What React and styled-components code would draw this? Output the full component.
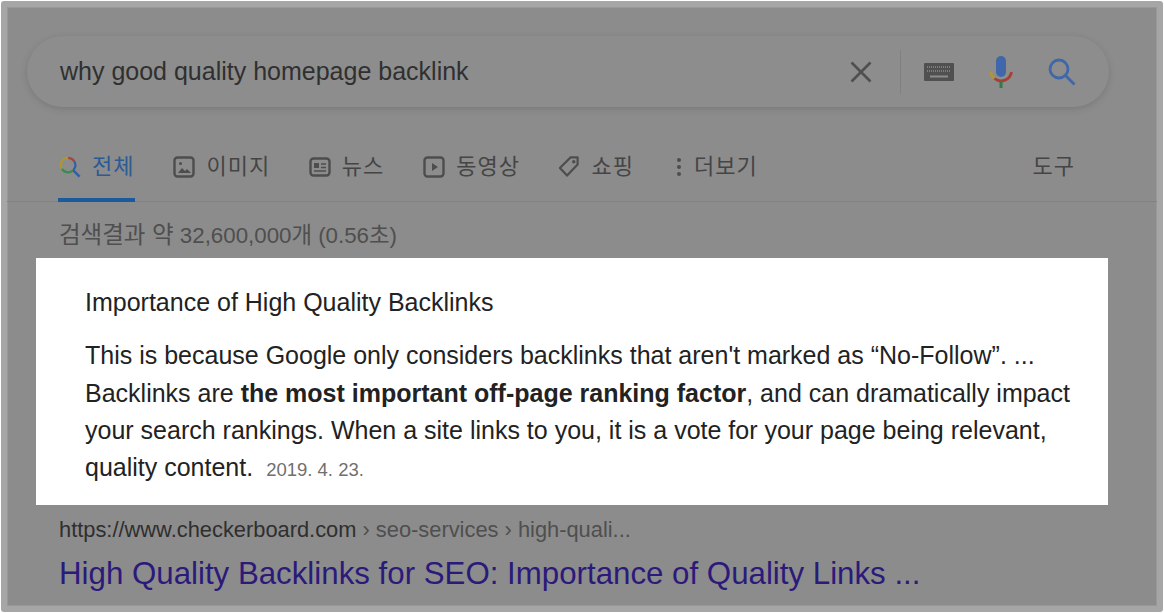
import React from 'react';
import styled, { createGlobalStyle } from 'styled-components';

const Global = createGlobalStyle`
  html, body { margin: 0; padding: 0; background: #fff; }
  body { font-family: "Liberation Sans", Arial, "Noto Sans CJK KR", sans-serif; }
`;

const Frame = styled.div`
  box-sizing: border-box;
  width: 1162px;
  height: 611px;
  margin: 1px 0 0 1px;
  border: 6px solid #a6a6a6;
  border-radius: 3px;
  background: #8c8c8c;
  box-shadow: inset 0 0 0 1px #989898;
  overflow: hidden;
`;

const SearchBar = styled.div`
  box-sizing: border-box;
  display: flex;
  align-items: center;
  width: 1082px;
  height: 71px;
  margin: 29px 0 0 20px;
  padding: 0 33px 0 33px;
  border-radius: 36px;
  background: #8d8d8d;
  box-shadow: 0 2px 6px rgba(60, 60, 60, 0.22);
`;

const Query = styled.div`
  flex: 1;
  font-size: 25px;
  color: #303030;
`;

const BarIcon = styled.svg`
  display: block;
  flex: none;
  margin-left: ${p => p.$gap || 0}px;
`;

const Sep = styled.div`
  width: 1px;
  height: 44px;
  margin-left: 27px;
  background: #808080;
`;

const Tabs = styled.div`
  display: flex;
  align-items: stretch;
  height: 94px;
  padding: 0 82px 0 51px;
  border-bottom: 1px solid #828282;
`;

const Tab = styled.div`
  box-sizing: border-box;
  display: flex;
  align-items: center;
  height: 95px;
  padding: 23px ${p => (p.$active ? 1 : 0)}px 0;
  margin-right: ${p => p.$gap}px;
  gap: 11px;
  font-size: 22px;
  letter-spacing: 1px;
  color: ${p => (p.$active ? '#2c5a94' : '#454545')};
  border-bottom: 4px solid ${p => (p.$active ? '#1c5a9e' : 'transparent')};
  font-family: "Noto Sans CJK KR", sans-serif;

  svg {
    display: block;
    margin-top: 5px;
  }
`;

const Tools = styled(Tab)`
  margin: 0 0 0 auto;
`;

const Stats = styled.div`
  margin: 20px 0 0 52px;
  height: 27px;
  line-height: 26px;
  font-size: 22.3px;
  color: #4f4f4f;
`;

const StatsLabel = styled.span`
  font-size: 23.5px;
`;

const Snippet = styled.div`
  box-sizing: border-box;
  width: 1072px;
  height: 247px;
  margin: 9px 0 0 29px;
  padding: 29px 0 0 49px;
  background: #fff;
  color: #222;
`;

const SnippetTitle = styled.div`
  font-size: 25px;
  line-height: 30px;
  margin-bottom: 20.4px;
`;

const SnippetBody = styled.div`
  font-size: 25px;
  line-height: 37.33px;
  white-space: nowrap;
`;

const Stamp = styled.span`
  font-size: 18.5px;
  color: #6f6f6f;
  margin-left: 6px;
`;

const Url = styled.div`
  margin: 11px 0 0 52px;
  font-size: 21.85px;
  line-height: 28px;
  color: #2f2f2f;
`;

const Crumb = styled.span`
  color: #4f4f4f;
`;

const ResultTitle = styled.div`
  margin: 12px 0 0 52px;
  font-size: 31.25px;
  line-height: 36px;
  color: #2b1a7a;
`;

const C = '#4d4d4d';

const ImageIcon = () => (
  <svg width="22" height="22" viewBox="0 0 22 22" fill="none">
    <rect x="1.5" y="1.5" width="19" height="19" rx="3" stroke={C} strokeWidth="2.4" />
    <circle cx="7.5" cy="7.5" r="1.5" fill={C} />
    <path d="M5 17l4-5 3 3 2-2 4 4z" fill={C} />
  </svg>
);
const NewsIcon = () => (
  <svg width="22" height="20" viewBox="0 0 22 20" fill="none">
    <rect x="1.5" y="1.5" width="19" height="17" rx="3" stroke={C} strokeWidth="2.4" />
    <rect x="5" y="6" width="5" height="5" fill={C} />
    <path d="M12 7h5M12 10.5h5M5 14h12" stroke={C} strokeWidth="1.7" />
  </svg>
);
const VideoIcon = () => (
  <svg width="22" height="22" viewBox="0 0 22 22" fill="none">
    <rect x="1.5" y="1.5" width="19" height="19" rx="3" stroke={C} strokeWidth="2.4" />
    <path d="M9 7l6 4-6 4z" fill={C} />
  </svg>
);
const TagIcon = () => (
  <svg width="22" height="23" viewBox="0 0 23 23" fill="none">
    <path d="M2 13L13 2h7.5v7.5L9.5 21z" stroke={C} strokeWidth="2.3" strokeLinejoin="round" />
    <circle cx="16.5" cy="6.5" r="1.8" fill={C} />
  </svg>
);
const MoreIcon = () => (
  <svg width="7" height="20" viewBox="0 0 7 20" fill={C}>
    <circle cx="3" cy="3" r="2" />
    <circle cx="3" cy="10" r="2" />
    <circle cx="3" cy="17" r="2" />
  </svg>
);
const ColorSearch = () => (
  <svg width="22" height="22" viewBox="0 0 23 23" fill="none" strokeWidth="2.2">
    <path d="M9.5 2a7.5 7.5 0 0 1 6.3 3.4" stroke="#a3483f" />
    <path d="M15.8 5.4A7.5 7.5 0 0 1 15 14.6" stroke="#2f5fa8" />
    <path d="M3 13.5A7.5 7.5 0 0 1 9.500 2" stroke="#b3962a" />
    <path d="M15 14.600A7.5 7.500 0 0 1 3 13.500" stroke="#3f8a4d" />
    <path d="M15 15l6.500 6.500" stroke="#2f5fa8" strokeWidth="2.600" />
  </svg>
);

export default function App() {
  return (
    <Frame>
      <Global />
      <SearchBar>
        <Query>why good quality homepage backlink</Query>
        <BarIcon width="24" height="24" viewBox="0 0 24 24" fill="none">
          <path d="M2.500 2.500l19 19M21.500 2.500l-19 19" stroke="#4f4f4f" strokeWidth="2.600" />
        </BarIcon>
        <Sep />
        <BarIcon $gap={23} width="30" height="18" viewBox="0 0 30 18">
          <rect width="30" height="18" rx="1" fill="#505050" />
          <path d="M3 4h24M3 8h24" stroke="#7c7c7c" strokeWidth="2" strokeDasharray="1 1" />
          <rect x="6" y="12.500" width="18" height="2" fill="#8c8c8c" />
        </BarIcon>
        <BarIcon $gap={35} width="24" height="32" viewBox="0 0 24 32" fill="none">
          <rect x="7" y="0" width="10" height="21" rx="5" fill="#3f67a9" />
          <path d="M1.500 16a10.500 10.500 0 0 0 4 6.500" stroke="#b3962a" strokeWidth="2.800" />
          <path d="M5.500 22.500a10.500 10.500 0 0 0 17-6.500" stroke="#a63f35" strokeWidth="2.800" />
          <rect x="10.500" y="26" width="3" height="6" fill="#2f7d45" />
        </BarIcon>
        <BarIcon $gap={35} width="28" height="28" viewBox="0 0 28 28" fill="none">
          <circle cx="11" cy="11" r="9" stroke="#3f67a9" strokeWidth="2.800" />
          <path d="M17.500 17.500l9 9" stroke="#3f67a9" strokeWidth="2.800" />
        </BarIcon>
      </SearchBar>
      <Tabs>
        <Tab $active $gap={38}>
          <ColorSearch />
          전체
        </Tab>
        <Tab $gap={38.5}>
          <ImageIcon />
          이미지
        </Tab>
        <Tab $gap={39}>
          <NewsIcon />
          뉴스
        </Tab>
        <Tab $gap={38.5}>
          <VideoIcon />
          동영상
        </Tab>
        <Tab $gap={42}>
          <TagIcon />
          쇼핑
        </Tab>
        <Tab $gap={0}>
          <MoreIcon />
          더보기
        </Tab>
        <Tools $gap={0}>도구</Tools>
      </Tabs>
      <Stats>
        <StatsLabel>검색결과 약</StatsLabel> 32,600,000개 (0.56초)
      </Stats>
      <Snippet>
        <SnippetTitle>Importance of High Quality Backlinks</SnippetTitle>
        <SnippetBody>
          This is because Google only considers backlinks that aren't marked as “No-Follow”. ...
          <br />
          Backlinks are <b>the most important off-page ranking factor</b>, and can dramatically impact
          <br />
          your search rankings. When a site links to you, it is a vote for your page being relevant,
          <br />
          quality content. <Stamp>2019. 4. 23.</Stamp>
        </SnippetBody>
      </Snippet>
      <Url>
        https://www.checkerboard.com<Crumb> › seo-services › high-quali...</Crumb>
      </Url>
      <ResultTitle>High Quality Backlinks for SEO: Importance of Quality Links ...</ResultTitle>
    </Frame>
  );
}
